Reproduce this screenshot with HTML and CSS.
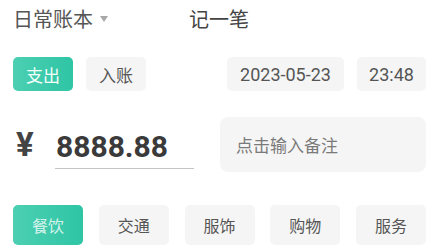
FILE: index.html
```html
<!DOCTYPE html>
<html lang="zh">
<head>
<meta charset="utf-8">
<link rel="stylesheet" href="styles.css">
</head>
<body>
<div class="page">
  <header class="top">
    <div class="book">日常账本
      <svg class="caret" width="8" height="6" viewBox="0 0 8 6"><path d="M0 0H8L4 6Z" fill="#a8a8a8"/></svg>
    </div>
    <div class="title">记一笔</div>
  </header>
  <div class="row2">
    <div class="btn active w60">支出</div>
    <div class="btn w60 ml13">入账</div>
    <div class="spacer"></div>
    <div class="btn num date">2023-05-23</div>
    <div class="btn num time">23:48</div>
  </div>
  <div class="row3">
    <div class="yen">¥</div>
    <div class="amount">8888.88</div>
    <div class="note">点击输入备注</div>
  </div>
  <div class="cats">
    <div class="cat active">餐饮</div>
    <div class="cat">交通</div>
    <div class="cat">服饰</div>
    <div class="cat">购物</div>
    <div class="cat">服务</div>
  </div>
</div>
</body>
</html>
```
FILE: styles.css
```css
html, body { margin: 0; padding: 0; background: #fff; }
body { font-family: Roboto, "Noto Sans CJK SC", sans-serif; color: #555; }
.page { width: 431px; height: 251px; padding: 0 5px 0 13px; box-sizing: border-box; overflow: hidden; }
.top { display: flex; align-items: center; height: 37px; }
.book { display: flex; align-items: center; font-family: "Noto Sans CJK SC", sans-serif; font-size: 20px; color: #555; }
.caret { margin-left: 7px; }
.title { margin-left: 81px; font-family: "Noto Sans CJK SC", sans-serif; font-size: 20px; color: #444; }
.row2 { display: flex; margin-top: 20px; height: 34px; }
.btn { display: flex; align-items: center; justify-content: center; height: 34px; background: #f5f5f5; border-radius: 5px; font-family: "Noto Sans CJK SC", sans-serif; font-size: 17px; color: #555; }
.btn.active { background: linear-gradient(90deg, #4ccfb2, #2ec5a5); color: #f4fffb; }
.w60 { width: 60px; }
.ml13 { margin-left: 13px; }
.spacer { flex: 1; }
.num { font-family: Roboto, sans-serif; font-size: 18px; color: #555; }
.date { width: 117px; }
.time { width: 69px; margin-left: 13px; }
.row3 { display: flex; align-items: center; margin-top: 26px; height: 55px; }
.yen { width: 42px; padding-left: 3px; box-sizing: border-box; font-family: Roboto, sans-serif; font-weight: bold; font-size: 33px; color: #444; }
.amount { width: 139px; height: 44px; display: flex; align-items: center; padding-left: 1px; box-sizing: border-box; border-bottom: 1.5px solid #c4c4c4; margin-top: 5px; font-family: Roboto, sans-serif; font-weight: bold; font-size: 30px; color: #3a3a3a; }
.note { margin-left: 26px; flex: 1; height: 55px; display: flex; align-items: center; padding-left: 16px; background: #f5f5f5; border-radius: 8px; font-family: "Noto Sans CJK SC", sans-serif; font-size: 17px; color: #7a7a7a; }
.cats { display: flex; justify-content: space-between; margin-top: 33px; }
.cat { width: 70px; height: 40px; display: flex; align-items: center; justify-content: center; background: #f5f5f5; border-radius: 5px; font-family: "Noto Sans CJK SC", sans-serif; font-size: 16px; color: #555; }
.cat.active { background: linear-gradient(90deg, #4ccfb2, #2ec5a5); color: rgba(255,255,255,0.8); }
```
